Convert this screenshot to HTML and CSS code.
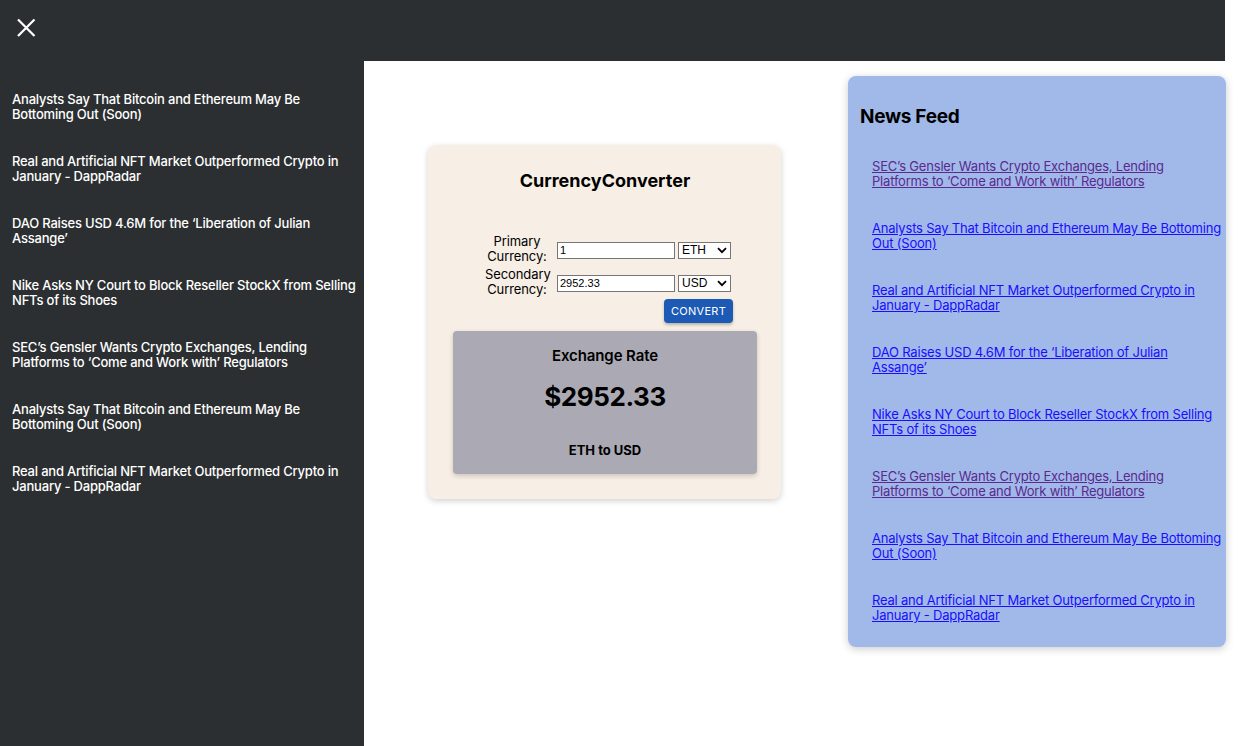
FILE: index.html
```html
<!DOCTYPE html>
<html lang="en">
<head>
<meta charset="utf-8">
<title>Currency Converter</title>
<link rel="stylesheet" href="styles.css">
</head>
<body>
<header class="topbar">
  <button class="close-btn" aria-label="Close">
    <svg width="20" height="20" viewBox="0 0 20 20"><path d="M2 1.5 L18.5 18 M18.5 1.5 L2 18" stroke="#ffffff" stroke-width="2.2" stroke-linecap="butt" fill="none"/></svg>
  </button>
</header>
<div class="layout">
  <aside class="sidebar">
    <p class="side-item">Analysts Say That Bitcoin and Ethereum May Be Bottoming Out (Soon)</p>
    <p class="side-item">Real and Artificial NFT Market Outperformed Crypto in January - DappRadar</p>
    <p class="side-item">DAO Raises USD 4.6M for the ‘Liberation of Julian Assange’</p>
    <p class="side-item">Nike Asks NY Court to Block Reseller StockX from Selling NFTs of its Shoes</p>
    <p class="side-item">SEC’s Gensler Wants Crypto Exchanges, Lending Platforms to ‘Come and Work with’ Regulators</p>
    <p class="side-item">Analysts Say That Bitcoin and Ethereum May Be Bottoming Out (Soon)</p>
    <p class="side-item">Real and Artificial NFT Market Outperformed Crypto in January - DappRadar</p>
  </aside>
  <main class="main">
    <section class="converter">
      <h2 class="conv-title">CurrencyConverter</h2>
      <div class="conv-form">
        <label class="conv-label">Primary Currency:</label>
        <input class="conv-input" type="text" value="1">
        <div class="select-wrap">
          <select class="conv-select"><option>ETH</option></select>
          <svg class="chev" width="10" height="7" viewBox="0 0 10 7"><path d="M1 1.2 L5 5.2 L9 1.2" stroke="#000" stroke-width="1.8" fill="none"/></svg>
        </div>
        <label class="conv-label">Secondary Currency:</label>
        <input class="conv-input" type="text" value="2952.33">
        <div class="select-wrap">
          <select class="conv-select"><option>USD</option></select>
          <svg class="chev" width="10" height="7" viewBox="0 0 10 7"><path d="M1 1.2 L5 5.2 L9 1.2" stroke="#000" stroke-width="1.8" fill="none"/></svg>
        </div>
      </div>
      <div class="btn-row">
        <button class="convert-btn">Convert</button>
      </div>
      <div class="rate-box">
        <h3 class="rate-title">Exchange Rate</h3>
        <p class="rate-value">$2952.33</p>
        <p class="rate-pair">ETH to USD</p>
      </div>
    </section>
    <section class="feed">
      <h2 class="feed-title">News Feed</h2>
      <div class="feed-list">
        <a class="feed-link visited" href="#">SEC’s Gensler Wants Crypto Exchanges, Lending Platforms to ‘Come and Work with’ Regulators</a>
        <a class="feed-link" href="#">Analysts Say That Bitcoin and Ethereum May Be Bottoming Out (Soon)</a>
        <a class="feed-link" href="#">Real and Artificial NFT Market Outperformed Crypto in January - DappRadar</a>
        <a class="feed-link" href="#">DAO Raises USD 4.6M for the ‘Liberation of Julian Assange’</a>
        <a class="feed-link" href="#">Nike Asks NY Court to Block Reseller StockX from Selling NFTs of its Shoes</a>
        <a class="feed-link visited" href="#">SEC’s Gensler Wants Crypto Exchanges, Lending Platforms to ‘Come and Work with’ Regulators</a>
        <a class="feed-link" href="#">Analysts Say That Bitcoin and Ethereum May Be Bottoming Out (Soon)</a>
        <a class="feed-link" href="#">Real and Artificial NFT Market Outperformed Crypto in January - DappRadar</a>
      </div>
    </section>
  </main>
</div>
</body>
</html>
```
FILE: styles.css
```css
* { box-sizing: border-box; }
html, body {
  margin: 0;
  padding: 0;
  background: #ffffff;
  font-family: Inter, "Noto Sans", "Liberation Sans", sans-serif;
  overflow: hidden;
}
.topbar {
  width: 1225px;
  height: 61px;
  background: #2c2f31;
  display: flex;
  align-items: flex-start;
  padding: 18px 0 0 16px;
}
.close-btn {
  background: none;
  border: none;
  padding: 0;
  margin: 0;
  width: 20px;
  height: 20px;
  display: block;
}
.close-btn svg { display: block; }
.layout {
  display: flex;
  height: 685px;
}
.sidebar {
  width: 364px;
  flex: 0 0 364px;
  background: #2c2f31;
  padding: 31px 4px 0 12px;
  display: flex;
  flex-direction: column;
  gap: 32px;
}
.side-item {
  margin: 0;
  color: #ffffff;
  font-size: 13px;
  line-height: 15px;
  font-weight: 500;
  letter-spacing: -0.2px;
}
.main {
  flex: 1;
  display: flex;
  align-items: flex-start;
  padding-left: 64px;
}
.converter {
  width: 353px;
  margin-top: 84px;
  background: #f7efe5;
  border-radius: 8px;
  box-shadow: 0 2px 6px rgba(0,0,0,0.18);
  padding: 25px 24px 25px 25px;
}
.conv-title {
  margin: 0;
  text-align: center;
  font-size: 18px;
  line-height: 22px;
  font-weight: 700;
  color: #000;
}
.conv-form {
  margin-top: 42px;
  padding-left: 32px;
  display: grid;
  grid-template-columns: 64px 126px 56px;
  row-gap: 3px;
  align-items: center;
}
.conv-label {
  font-size: 13px;
  line-height: 15px;
  text-align: center;
  color: #000;
  height: 30px;
  width: 64px;
  letter-spacing: -0.1px;
}
.conv-input {
  display: block;
  width: 118px;
  height: 17px;
  border: 1px solid #767676;
  background: #fff;
  padding: 0 2px;
  font-family: "Liberation Sans", Arial, sans-serif;
  font-size: 11px;
  color: #000;
  margin: 2px 0 0 8px;
  outline: none;
}
.select-wrap {
  position: relative;
  width: 53px;
  height: 17px;
  margin: 2px 0 0 3px;
}
.conv-select {
  display: block;
  appearance: none;
  -webkit-appearance: none;
  width: 53px;
  height: 17px;
  border: 1px solid #767676;
  border-radius: 0;
  background: #fff;
  font-family: "Liberation Sans", Arial, sans-serif;
  font-size: 12px;
  line-height: 15px;
  padding: 0 0 0 3px;
  margin: 0;
  color: #000;
}
.chev {
  position: absolute;
  right: 4px;
  top: 5px;
  pointer-events: none;
}
.btn-row {
  display: flex;
  justify-content: flex-end;
  margin-top: 2px;
  padding-right: 24px;
}
.convert-btn {
  width: 69px;
  height: 24px;
  background: #1c5ab5;
  color: #fff;
  border: none;
  border-radius: 4px;
  font-family: Inter, "Liberation Sans", sans-serif;
  font-size: 11px;
  letter-spacing: 0.3px;
  text-transform: uppercase;
  font-weight: 400;
  box-shadow: 0 2px 3px rgba(0,0,0,0.25);
  padding: 0;
}
.rate-box {
  margin-top: 8px;
  background: #abaab4;
  border-radius: 4px;
  box-shadow: 0 2px 5px rgba(0,0,0,0.18);
  padding: 16px 0 16px;
  text-align: center;
  color: #000;
}
.rate-title {
  margin: 0;
  font-size: 15px;
  line-height: 18px;
  font-weight: 600;
  letter-spacing: -0.1px;
}
.rate-value {
  margin: 16px 0 0;
  font-size: 26px;
  line-height: 32px;
  font-weight: 700;
  letter-spacing: -0.4px;
}
.rate-pair {
  margin: 29px 0 0;
  font-size: 13px;
  line-height: 16px;
  font-weight: 700;
}
.feed {
  width: 378px;
  margin-top: 15px;
  margin-left: 67px;
  background: #a1b9e9;
  border-radius: 8px;
  box-shadow: 0 2px 8px rgba(0,0,0,0.2);
  padding: 29px 3px 24px 12px;
}
.feed-title {
  margin: 0;
  font-size: 19px;
  line-height: 24px;
  font-weight: 700;
  color: #000;
  letter-spacing: -0.3px;
}
.feed-list {
  margin-top: 30px;
  padding-left: 12px;
  display: flex;
  flex-direction: column;
  gap: 32px;
}
.feed-link {
  display: block;
  font-size: 13px;
  line-height: 15px;
  color: #1a0dff;
  text-decoration: underline;
  letter-spacing: -0.2px;
}
.feed-link.visited { color: #5a2a8e; }
```
